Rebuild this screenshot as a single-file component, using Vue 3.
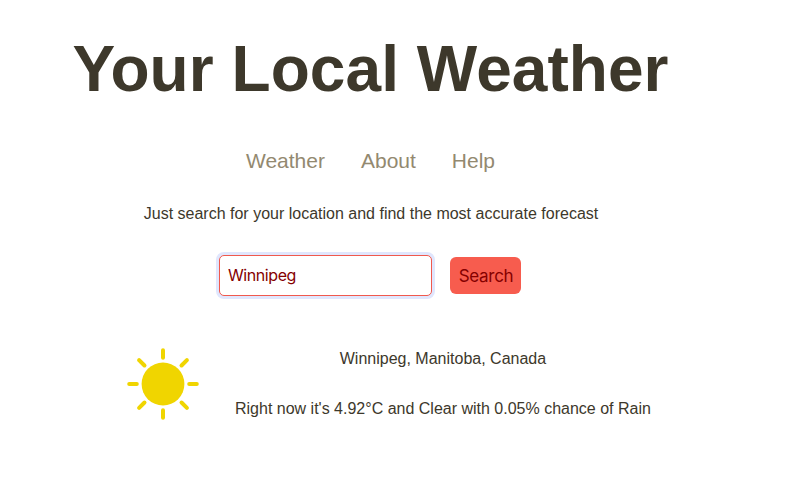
<script setup>
import { ref } from 'vue'

const links = ['Weather', 'About', 'Help']
const query = ref('Winnipeg')
const rays = [0, 45, 90, 135, 180, 225, 270, 315]
</script>

<template>
  <main class="page">
    <h1>Your Local Weather</h1>
    <nav>
      <a v-for="link in links" :key="link">{{ link }}</a>
    </nav>
    <p class="intro">Just search for your location and find the most accurate forecast</p>
    <form class="search" @submit.prevent>
      <input v-model="query" type="text" />
      <button type="submit">Search</button>
    </form>
    <section class="result">
      <svg class="sun" viewBox="0 0 72 72">
        <circle cx="36" cy="36" r="21.4" />
        <path v-for="r in rays" :key="r" d="M36 2.2V9.8" :transform="`rotate(${r} 36 36)`" />
      </svg>
      <div class="forecast">
        <p>Winnipeg, Manitoba, Canada</p>
        <p>Right now it's 4.92°C and Clear with 0.05% chance of Rain</p>
      </div>
    </section>
  </main>
</template>

<style>
body { background: #fff; }
</style>

<style scoped>
.page {
  width: 741px;
  height: 497px;
  overflow: hidden;
  box-sizing: border-box;
  padding-top: 32px;
  display: flex;
  flex-direction: column;
  align-items: center;
  font-family: "Liberation Sans", Arial, sans-serif;
  font-size: 16px;
  color: #3d382b;
}
h1 { margin: 0; font-size: 64px; line-height: 74px; letter-spacing: 0.06px; white-space: nowrap; }
nav {
  display: flex;
  gap: 36px;
  margin-top: 42px;
  font-size: 21px;
  line-height: 25px;
  color: #938970;
}
p { margin: 0; line-height: 18px; white-space: nowrap; }
.intro { margin-top: 32px; margin-left: 1px; }
.search { display: flex; align-items: center; gap: 18px; margin-top: 32px; margin-right: 1px; }
input {
  box-sizing: border-box;
  width: 213px;
  height: 41px;
  padding: 0 8px 1px;
  border: 1px solid #f0594d;
  border-radius: 5px;
  box-shadow: 0 0 0 3px #e0e6fd;
  outline: none;
  background: #fff;
  color: #850000;
  font: 16px Inter, sans-serif;
  letter-spacing: -0.42px;
}
button {
  box-sizing: border-box;
  width: 71px;
  height: 37px;
  padding: 0 0 0 1px;
  border: 0;
  border-radius: 6px;
  background: #f75c4e;
  color: #850000;
  font: 17px Inter, sans-serif;
  letter-spacing: -0.3px;
}
.result { display: flex; gap: 36px; margin-top: 52px; align-self: flex-start; margin-left: 127px; }
.sun { width: 72px; height: 72px; fill: #f0d500; stroke: #f0d500; }
.sun circle { stroke: none; }
.sun path { stroke-width: 4; stroke-linecap: round; }
.forecast { display: flex; flex-direction: column; align-items: center; gap: 32px; padding-top: 2px; }
</style>
